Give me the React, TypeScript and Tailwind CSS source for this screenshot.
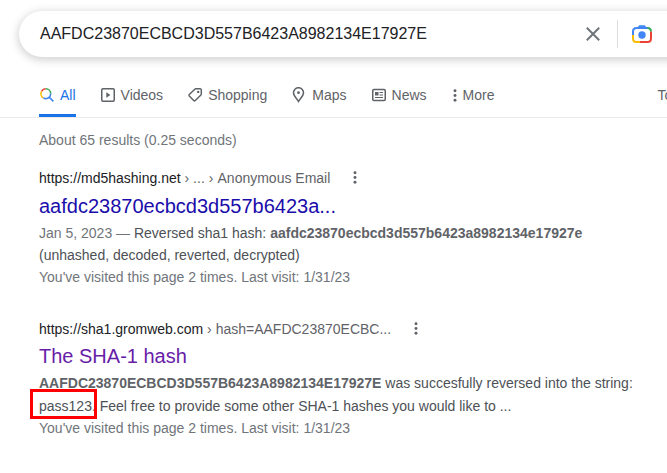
import type { ReactNode } from 'react';

function Dots({ className }: { className: string }) {
  return (
    <svg viewBox="0 0 4 14" fill="currentColor" className={className}>
      <circle cx="2" cy="2" r="1.6" />
      <circle cx="2" cy="7" r="1.6" />
      <circle cx="2" cy="12" r="1.6" />
    </svg>
  );
}

function Stroke({ children }: { children: ReactNode }) {
  return (
    <svg viewBox="0 0 16 16" fill="none" stroke="currentColor" strokeWidth="1.5" className="h-4 w-4 shrink-0">
      {children}
    </svg>
  );
}

function SearchIcon() {
  return (
    <svg viewBox="0 0 16 16" fill="none" strokeWidth="1.6" className="h-4 w-4 shrink-0">
      <path d="M2.56 4.3A4.9 4.9 0 0 1 6.8 1.8" stroke="#ea4335" />
      <path d="M6.8 1.8A4.9 4.9 0 0 1 11.7 6.7" stroke="#34a853" />
      <path d="M4.3 10.9A4.9 4.9 0 0 1 2.56 4.3" stroke="#fbbc04" />
      <path d="M11.7 6.7A4.9 4.9 0 0 1 4.3 10.9M10 10l4.4 4.4" stroke="#4285f4" />
    </svg>
  );
}

function LensIcon() {
  return (
    <svg viewBox="0 0 20 18" fill="none" strokeWidth="2" className="h-[18px] w-5 shrink-0">
      <path d="M1 10V6.5Q1 3 4.5 3H16" stroke="#4285f4" />
      <path d="M5 3L7.2 0.2H12.8L15 3Z" fill="#4285f4" />
      <path d="M15.5 3Q19 3 19 6.8" stroke="#34a853" />
      <path d="M19 9V13.5Q19 17 15.5 17H10" stroke="#ea4335" />
      <path d="M19 6.8V9.2" stroke="#ea4335" />
      <path d="M1 10V13.5Q1 17 4.5 17H8" stroke="#fbbc04" />
      <path d="M8 17H10" stroke="#ea4335" />
      <circle cx="10" cy="10" r="3.7" fill="#4285f4" />
    </svg>
  );
}

function Tab({ icon, label }: { icon: ReactNode; label: string }) {
  return (
    <div className="flex items-center gap-[5px]">
      {icon}
      <span>{label}</span>
    </div>
  );
}

function ResultUrl({ site, path }: { site: string; path: ReactNode }) {
  return (
    <div className="flex h-[22px] items-center leading-[22px] text-[#5f6368]">
      <span className="whitespace-pre">
        <span className="text-[#202124]">{site}</span>
        {path}
      </span>
      <Dots className="ml-[23px] mb-0.5 h-[13px] w-1" />
    </div>
  );
}

export default function App() {
  return (
    <div className="h-[473px] w-[667px] overflow-hidden bg-white font-['Liberation_Sans',Arial,sans-serif] text-sm whitespace-nowrap text-[#4d5156]">
      <header className="flex h-[118px] flex-col border-b border-[#ebebeb] pt-[11px]">
        <div className="ml-[19px] flex h-[46px] w-[690px] shrink-0 items-center rounded-full bg-white pl-[21px] shadow-[0_2px_8px_1px_rgba(64,60,67,0.24)]">
          <span className="w-[546px] text-base text-[#202124]">AAFDC23870ECBCD3D557B6423A8982134E17927E</span>
          <svg viewBox="0 0 14 14" stroke="#70757a" strokeWidth="2" className="h-3.5 w-3.5 shrink-0">
            <path d="M0.8 0.8L13.2 13.2M13.2 0.8L0.8 13.2" />
          </svg>
          <span className="mr-3.5 ml-[17px] h-7 w-px shrink-0 bg-[#dadce0]" />
          <LensIcon />
        </div>
        <nav className="mt-4 flex h-11 w-[700px] gap-6 pl-[39px] text-[#5f6368]">
          <div className="flex h-11 items-center gap-[5px] border-b-3 border-[#1a73e8] pt-[3px] text-[#1a73e8]">
            <SearchIcon />
            <span>All</span>
          </div>
          <Tab
            label="Videos"
            icon={
              <Stroke>
                <rect x="1.75" y="1.75" width="12.5" height="12.5" rx="1.2" />
                <path d="M6.3 5.2L10.4 8L6.3 10.8Z" fill="currentColor" stroke="none" />
              </Stroke>
            }
          />
          <Tab
            label="Shopping"
            icon={
              <Stroke>
                <path d="M8.8 1.8H13Q14.3 1.8 14.3 3.1V7Q14.3 7.6 13.9 8L8.3 13.5Q7.5 14.2 6.7 13.5L2.3 9.1Q1.6 8.3 2.3 7.5L7.8 2.2Q8.2 1.8 8.8 1.8Z" />
                <circle cx="11.2" cy="4.9" r="1.2" fill="currentColor" stroke="none" />
              </Stroke>
            }
          />
          <Tab
            label="Maps"
            icon={
              <Stroke>
                <path d="M7.5 14.4C6.2 11.9 2.5 9.1 2.5 5.7A5 5 0 0 1 12.5 5.7C12.5 9.1 8.8 11.9 7.5 14.4Z" />
                <circle cx="7.5" cy="5.7" r="1.4" fill="currentColor" stroke="none" />
              </Stroke>
            }
          />
          <Tab
            label="News"
            icon={
              <Stroke>
                <rect x="1.75" y="2.5" width="12.5" height="11" rx="1.2" />
                <path d="M4 5H7.5V8.5H4Z" fill="currentColor" stroke="none" />
                <path d="M8.5 5.5H12M8.5 8H12M4 10.5H12" strokeWidth="1.2" />
              </Stroke>
            }
          />
          <div className="flex items-center pl-0.5">
            <Dots className="mr-1.5 h-[13px] w-1" />
            <span>More</span>
          </div>
          <span className="ml-[139px] self-center">To</span>
        </nav>
      </header>

      <main className="pt-[11px] pl-[39px] leading-[22px]">
        <div className="text-[#70757a]">About 65 results (0.25 seconds)</div>

        <article className="pt-4">
          <ResultUrl
            site="https://md5hashing.net"
            path={
              <>
                {' › ... › '}
                <span className="ml-[0.3px]">Anonymous Email</span>
              </>
            }
          />
          <h3 className="mt-1 text-xl leading-[26px] text-[#1a0dab]">aafdc23870ecbcd3d557b6423a...</h3>
          <div className="mt-[3px]">
            <span className="text-[#70757a]">Jan 5, 2023 — </span>Reversed sha1 hash:{' '}
            <b className="text-[#5f6368]">aafdc23870ecbcd3d557b6423a8982134e17927e</b>
          </div>
          <div>(unhashed, decoded, reverted, decrypted)</div>
          <div className="text-[#70757a]">You've visited this page 2 times. Last visit: 1/31/23</div>
        </article>

        <article className="pt-[30px]">
          <ResultUrl site="https://sha1.gromweb.com" path=" › hash=AAFDC23870ECBC..." />
          <h3 className="mt-[3px] text-xl leading-[26px] text-[#681da8]">The SHA-1 hash</h3>
          <div className="mt-[3px]">
            <b className="text-[#5f6368]">AAFDC23870ECBCD3D557B6423A8982134E17927E</b> was succesfully reversed into the string:
          </div>
          <div className="mt-px">
            <span className="relative">
              pass123.
              <span className="absolute -top-[9px] -left-[9px] h-[30px] w-[67px] border-[3px] border-[#ff0000]" />
            </span>{' '}
            Feel free to provide some other SHA-1 hashes you would like to ...
          </div>
          <div className="text-[#70757a]">You've visited this page 2 times. Last visit: 1/31/23</div>
        </article>
      </main>
    </div>
  );
}
